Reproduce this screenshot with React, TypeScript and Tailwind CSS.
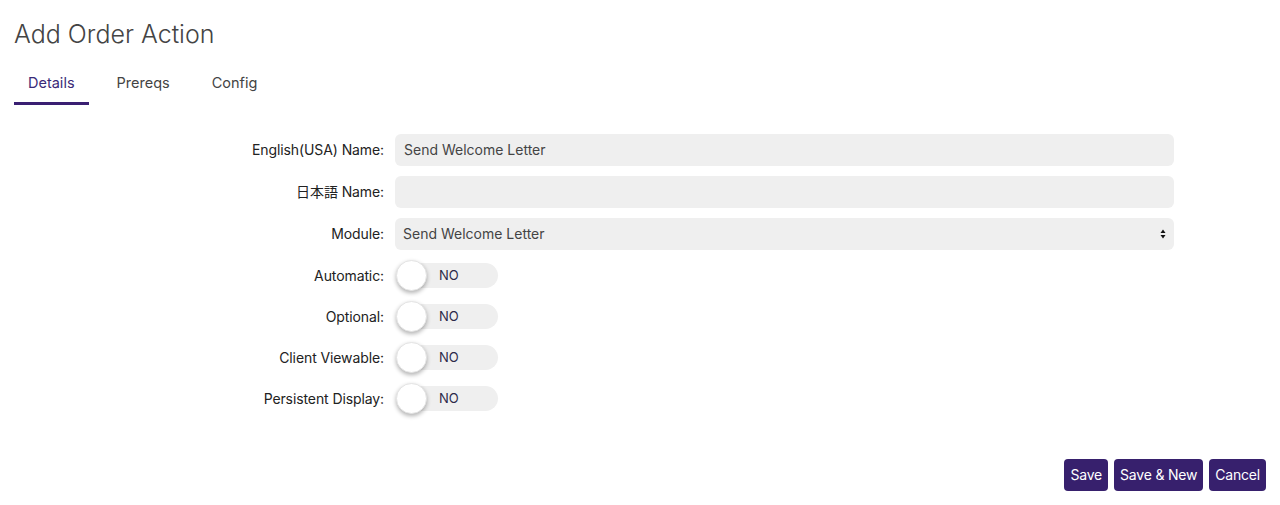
import React from 'react';

const font = { fontFamily: 'Inter, "Noto Sans CJK JP", sans-serif' };

function Toggle() {
  return (
    <div className="relative flex h-[31px] w-[104px] items-center">
      <div className="ml-[3px] flex h-[25px] w-[100px] items-center rounded-full bg-[#efefef] pl-[41px] text-[13px] text-[#2c2a4a]">
        NO
      </div>
      <div className="absolute left-[1px] top-0 h-[31px] w-[31px] rounded-full border border-[#e4e4e4] bg-white shadow-[0_2px_4px_rgba(0,0,0,0.3)]" />
    </div>
  );
}

function Row({ label, children }: { label: string; children: React.ReactNode }) {
  return (
    <div className="flex items-center">
      <label className="w-[370px] text-right text-[14px] tracking-[-0.1px] text-[#222]">{label}</label>
      <div className="ml-[11px]">{children}</div>
    </div>
  );
}

export default function App() {
  return (
    <div className="h-[505px] w-[1280px] bg-white px-[14px] pt-[16px]" style={font}>
      <h1 className="text-[25px] font-light leading-[36px] text-[#444]">Add Order Action</h1>

      {/* Tabs */}
      <div className="mt-[20px] flex gap-[14px] text-[14.5px]">
        <div className="border-b-[3px] border-[#3a1f72] px-[14px] pb-[8px] text-[#3a2a78]">Details</div>
        <div className="px-[14px] pb-[8px] text-[#444]">Prereqs</div>
        <div className="px-[14px] pb-[8px] text-[#444]">Config</div>
      </div>

      {/* Form */}
      <div className="mt-[29px] flex flex-col gap-[10px]">
        <Row label="English(USA) Name:">
          <div className="flex h-[32px] w-[779px] items-center rounded-[6px] bg-[#efefef] px-[9px] text-[14px] text-[#444]">
            Send Welcome Letter
          </div>
        </Row>
        <Row label="日本語 Name:">
          <div className="h-[32px] w-[779px] rounded-[6px] bg-[#efefef]" />
        </Row>
        <Row label="Module:">
          <div className="flex h-[32px] w-[779px] items-center justify-between rounded-[6px] bg-[#efefef] pl-[8px] pr-[8px] text-[14px] text-[#444]">
            <span>Send Welcome Letter</span>
            <svg width="6" height="10" viewBox="0 0 6 10">
              <path d="M3 0.5L5.5 4H0.5Z" fill="#111" />
              <path d="M3 9.5L5.5 6H0.5Z" fill="#111" />
            </svg>
          </div>
        </Row>
      </div>

      <div className="mt-[10px] flex flex-col gap-[10px]">
        <Row label="Automatic:"><Toggle /></Row>
        <Row label="Optional:"><Toggle /></Row>
        <Row label="Client Viewable:"><Toggle /></Row>
        <Row label="Persistent Display:"><Toggle /></Row>
      </div>

      {/* Buttons */}
      <div className="mt-[45px] flex justify-end gap-[6px]">
        <button className="h-[32px] rounded-[4px] bg-[#37206d] px-[6px] text-[14px] tracking-[-0.2px] text-white">Save</button>
        <button className="h-[32px] rounded-[4px] bg-[#37206d] px-[6px] text-[14px] tracking-[-0.2px] text-white">Save &amp; New</button>
        <button className="h-[32px] rounded-[4px] bg-[#37206d] px-[6px] text-[14px] tracking-[-0.2px] text-white">Cancel</button>
      </div>
    </div>
  );
}
